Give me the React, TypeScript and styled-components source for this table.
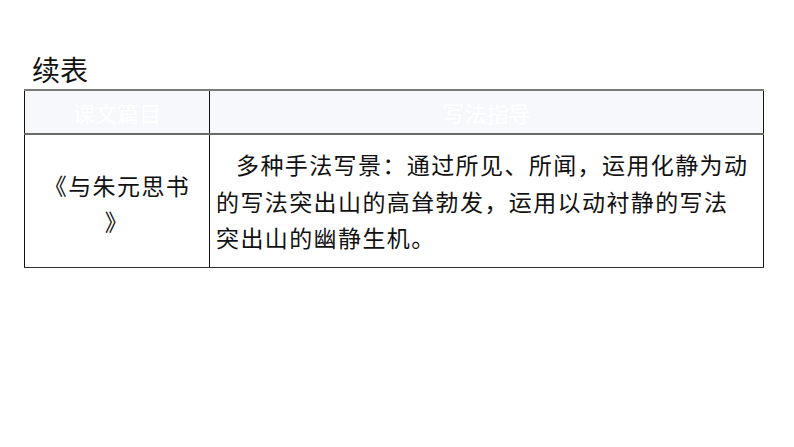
import React from "react";
import styled, { createGlobalStyle } from "styled-components";

const Global = createGlobalStyle`
  html, body { margin: 0; padding: 0; background: #ffffff; }
  body { font-family: "Noto Sans CJK SC", "Noto Sans", sans-serif; color: #111; }
`;

const Page = styled.div`
  width: 794px;
  height: 447px;
  box-sizing: border-box;
  padding: 52px 0 0 24px;
  display: flex;
  flex-direction: column;
`;

const Title = styled.h2`
  margin: 0 0 0 8px;
  height: 37px;
  font-size: 28px;
  font-weight: 400;
  line-height: 34px;
  color: #111;
`;

const Table = styled.table`
  width: 740px;
  border-collapse: collapse;
  table-layout: fixed;
`;

const HeadCell = styled.th<{ $w?: number }>`
  width: ${(p) => (p.$w ? `${p.$w}px` : "auto")};
  height: 42px;
  padding: 0;
  background: #f7f8fc;
  color: #ffffff;
  font-size: 22px;
  font-weight: 400;
  text-align: center;
  border-top: 2px solid #7a7a7a;
  border-bottom: 2px solid #6a6a6a;
  border-left: 1px solid #111;
  border-right: 1px solid #111;
`;

const Cell = styled.td`
  height: 128px;
  padding: 0 14px 0 6px;
  vertical-align: middle;
  text-align: left;
  font-size: 23px;
  letter-spacing: 1.4px;
  line-height: 36.5px;
  text-spacing-trim: space-all;
  color: #111;
  border-left: 1px solid #111;
  border-right: 1px solid #111;
  border-bottom: 1px solid #333;
`;

const NameCell = styled(Cell)`
  padding: 4px 10px 0 10px;
  text-align: center;
  line-break: anywhere;
`;

const Para = styled.p`
  margin: 0;
  text-indent: 20px;
`;

export default function App() {
  return (
    <>
      <Global />
      <Page>
        <Title>续表</Title>
        <Table>
          <thead>
            <tr>
              <HeadCell $w={184}>课文篇目</HeadCell>
              <HeadCell>写法指导</HeadCell>
            </tr>
          </thead>
          <tbody>
            <tr>
              <NameCell>《与朱元思书》</NameCell>
              <Cell>
                <Para>
                  多种手法写景：通过所见、所闻，运用化静为动的写法突出山的高耸勃发，运用以动衬静的写法突出山的幽静生机。
                </Para>
              </Cell>
            </tr>
          </tbody>
        </Table>
      </Page>
    </>
  );
}
